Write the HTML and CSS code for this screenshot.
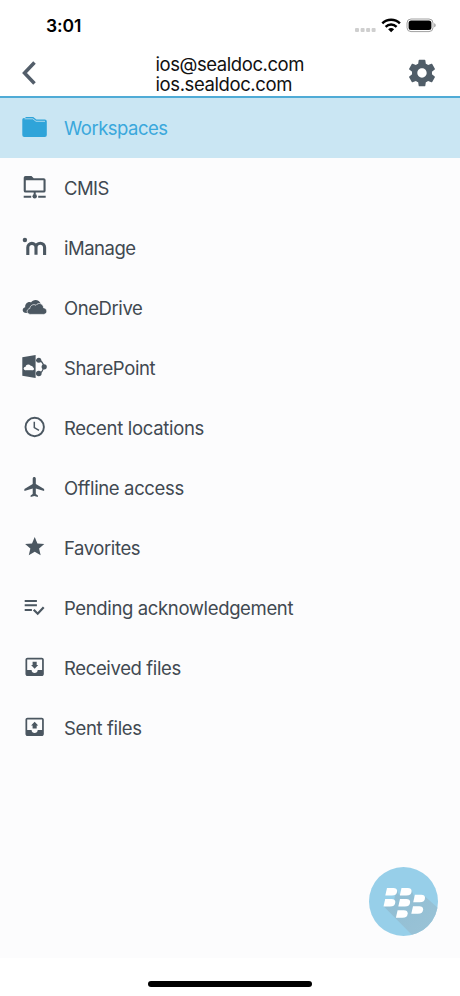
FILE: index.html
```html
<!DOCTYPE html>
<html lang="en">
<head>
<meta charset="utf-8">
<title>Locations</title>
<link rel="stylesheet" href="styles.css">
</head>
<body>
<div class="screen">
  <div class="status">
    <span class="time">3:01</span>
    <svg class="indicators" width="82" height="20" viewBox="0 0 82 20">
      <g fill="#cfcfcf"><rect x="0" y="12" width="4" height="4" rx="1"/><rect x="5.6" y="12" width="4" height="4" rx="1"/><rect x="11.1" y="12" width="4" height="4" rx="1"/><rect x="16.6" y="12" width="4" height="4" rx="1"/></g>
      <g fill="none" stroke="#000" stroke-width="2.500"><path d="M27.300 7.300a12.600 12.600 0 0 1 17.600 0"/><path d="M30.600 10.800a8 8 0 0 1 11 0"/></g>
      <path d="M33.100 13.300a4.600 4.600 0 0 1 6 0l-3 3z"/>
      <rect x="52" y="3" width="26" height="12.600" rx="4" fill="none" stroke="#a0a0a0"/>
      <rect x="53.600" y="4.600" width="22.800" height="9.400" rx="2.500"/>
      <path d="M79.200 7.200c2 .5 2 3.600 0 4.100z" fill="#a0a0a0"/>
    </svg>
  </div>
  <header class="header">
    <svg class="back" width="18" height="26" viewBox="0 0 18 26"><path d="M14.500 2.500L4.500 13l10 10.500" fill="none" stroke="#535e6a" stroke-width="3.500"/></svg>
    <div class="account"><div class="mail">ios@sealdoc.com</div><div class="host">ios.sealdoc.com</div></div>
    <svg class="gear" width="32" height="32" viewBox="0 0 24 24"><path d="M19.430 12.980c.04-.32.07-.64.07-.98s-.03-.66-.07-.98l2.110-1.650c.19-.15.24-.42.12-.64l-2-3.460c-.12-.22-.39-.3-.61-.22l-2.490 1c-.52-.4-1.080-.73-1.690-.98l-.38-2.650C14.460 2.180 14.250 2 14 2h-4c-.25 0-.46.18-.49.42l-.38 2.650c-.61.25-1.170.59-1.690.98l-2.490-1c-.23-.09-.49 0-.61.22l-2 3.460c-.13.22-.07.49.12.64l2.110 1.650c-.04.32-.07.65-.07.98s.03.66.07.98l-2.110 1.650c-.19.15-.24.42-.12.64l2 3.460c.12.22.39.3.61.22l2.490-1c.52.4 1.080.73 1.690.98l.38 2.650c.03.24.24.42.49.42h4c.25 0 .46-.18.49-.42l.38-2.650c.61-.25 1.170-.59 1.690-.98l2.490 1c.23.09.49 0 .61-.22l2-3.460c.12-.22.07-.49-.12-.64l-2.110-1.650zM12 15.500c-1.930 0-3.500-1.570-3.500-3.500s1.570-3.500 3.500-3.500 3.500 1.570 3.500 3.500-1.570 3.500-3.500 3.500z"/></svg>
  </header>
  <main class="list">
    <div class="row active">
      <svg class="icon" viewBox="0 0 32 32"><path d="M4.300 9V7.500q0-1.500 1.600-1.500H7l1-.9h7.200l3.200 2.500h8.400q2 0 2 2V23q0 2-2 2H6.300q-2 0-2-2z"/><path d="M6.500 6.800h8.300l3.200 2.500h9" fill="none" stroke="#b9dff0" stroke-width=".9"/></svg>
      <span class="label l1">Workspaces</span></div>
    <div class="row">
      <svg class="icon" viewBox="0 0 32 32"><path fill-rule="evenodd" d="M5.700 5.700q0-1.800 1.800-1.800h6l2.200 2.300h10q1.900 0 1.900 1.900v10.600q0 1.900-1.900 1.900H7.600q-1.900 0-1.900-1.900zM7.800 8.300v10.200h17.700V8.300z"/><path d="M15.700 20h2v2.400h-2z"/><circle cx="16.700" cy="24.300" r="2.200"/><path d="M5.700 23.800h7.500v2H5.700zM20.200 23.800h7.500v2h-7.500z"/></svg>
      <span class="label l2">CMIS</span></div>
    <div class="row">
      <svg class="icon" viewBox="0 0 32 32"><circle cx="6.900" cy="8" r="2.200"/><path d="M9.800 23v-7.500a4.100 4.100 0 0 1 8.200 0V22.700v-7.200a4.300 4.300 0 0 1 8.600 0V23" fill="none" stroke="currentColor" stroke-width="3.100"/></svg>
      <span class="label l3">iManage</span></div>
    <div class="row">
      <svg class="icon" viewBox="0 0 32 32"><path d="M8.300 21C4 21 3.500 16 7.200 15.200 6.800 11.300 10.500 9 13 10.400 15 6.800 21.500 7 22.800 12l-3 7-9 2z"/><path d="M12.500 22.400C8.300 22.400 8 17.300 11.800 16.500 12.200 13 15.800 11.700 18 13.300c2.300-3.500 7.700-1.500 7.500 2.500 4.500.4 4.300 6.600 0 6.600z" stroke="#fcfcfd" stroke-width=".7"/></svg>
      <span class="label l4">OneDrive</span></div>
    <div class="row">
      <svg class="icon" viewBox="0 0 32 32"><path d="M4.300 5.200L17.600 3v23L4.300 23.800z"/><g fill="#fcfcfd"><circle cx="7.400" cy="16.500" r="1.700"/><circle cx="10.300" cy="15.200" r="2.700"/><circle cx="13" cy="15.700" r="1.900"/><circle cx="14.500" cy="16.700" r="1.500"/><path d="M7.400 15.500h7v2.700h-7z"/></g><g fill="none" stroke="currentColor" stroke-width="1.300"><path d="M20.800 8.500q4 .5 5 6-1 6-5 7M18 8.500h3M18 21.500h3"/></g><circle cx="20.800" cy="8.300" r="2.500"/><circle cx="26.200" cy="14.800" r="2.600"/><circle cx="20.800" cy="21.500" r="2.800"/></svg>
      <span class="label l5">SharePoint</span></div>
    <div class="row">
      <svg class="icon" viewBox="0 0 32 32"><g fill="none" stroke="currentColor"><circle cx="16.700" cy="15" r="9.200" stroke-width="1.900"/><path d="M16.300 9.700v5.900l4.700 2.700" stroke-width="1.500"/></g></svg>
      <span class="label l6">Recent locations</span></div>
    <div class="row">
      <svg class="icon" viewBox="0 0 32 32"><path transform="translate(4.300 3) scale(1.040 1)" d="M21 16v-2l-8-5V3.500c0-.83-.67-1.500-1.500-1.500S10 2.670 10 3.500V9l-8 5v2l8-2.500V19l-2 1.500V22l3.500-1 3.500 1v-1.500L13 19v-5.500l8 2.500z"/></svg>
      <span class="label l7">Offline access</span></div>
    <div class="row">
      <svg class="icon" viewBox="0 0 32 32"><path transform="translate(5.200 3.200) scale(.960)" d="M12 17.270L18.180 21l-1.640-7.030L22 9.240l-7.190-.61L12 2 9.190 8.630 2 9.240l5.460 4.730L5.820 21z"/></svg>
      <span class="label l8">Favorites</span></div>
    <div class="row">
      <svg class="icon" viewBox="0 0 32 32"><path d="M6.700 8h12.200v2H6.700zM6.700 12.300h12.200v2H6.700zM6.700 17h7.200v2H6.700z"/><path d="M15.700 17.700l4 4 6-6.500" fill="none" stroke="currentColor" stroke-width="2.200"/></svg>
      <span class="label l9">Pending acknowledgement</span></div>
    <div class="row">
      <svg class="icon" viewBox="0 0 32 32"><path transform="translate(4.400 2.700) scale(1.020)" d="M19 3H5c-1.110 0-2 .9-2 2v14c0 1.100.88 2 2 2h14c1.100 0 2-.9 2-2V5c0-1.100-.9-2-2-2zm.3 12H15c0 1.660-1.350 3-3 3s-3-1.340-3-3H4.700V4.700h14.600zM15.500 10H14V7h-4v3H8.500l3.500 3.700z"/></svg>
      <span class="label l10">Received files</span></div>
    <div class="row">
      <svg class="icon" viewBox="0 0 32 32"><path transform="translate(4.400 2.700) scale(1.020)" d="M19 3H5c-1.110 0-2 .9-2 2v14c0 1.100.88 2 2 2h14c1.100 0 2-.9 2-2V5c0-1.100-.9-2-2-2zm.3 12H15c0 1.660-1.350 3-3 3s-3-1.340-3-3H4.700V4.700h14.600zM8.500 10.500H10v3h4v-3h1.500L12 6.800z"/></svg>
      <span class="label l11">Sent files</span></div>
    <svg class="fab" width="69" height="69" viewBox="0 0 69 69">
      <defs>
        <clipPath id="disc"><circle cx="34.500" cy="34.500" r="34.500"/></clipPath>
        <linearGradient id="shade" x1="0" y1="0" x2="1" y2="1"><stop offset="0" stop-color="#8fbdd3"/><stop offset="1" stop-color="#9bc3d6"/></linearGradient>
        <path id="cell" d="M1.700 0H8Q11.800 0 11.800 3 11.800 7.500 6.500 7.500H0z"/>
      </defs>
      <circle cx="34.500" cy="34.500" r="34.500" fill="#97cfe9"/>
      <path clip-path="url(#disc)" fill="url(#shade)" d="M14.300 39L45 70h25V42L55.500 29 47 35 42.500 22.500 30 28 27.500 22 24 38z"/>
      <g fill="#fff"><use href="#cell" x="16.300" y="21"/><use href="#cell" x="30.800" y="21"/><use href="#cell" x="14.500" y="32"/><use href="#cell" x="29.300" y="32"/><use href="#cell" x="44.200" y="27.800"/><use href="#cell" x="42.300" y="39.300"/><use href="#cell" x="26.900" y="43.200"/></g>
    </svg>
  </main>
  <footer class="home"><div class="bar"></div></footer>
</div>
</body>
</html>
```
FILE: styles.css
```css
body { margin: 0; font-family: Inter, "Liberation Sans", sans-serif; }
svg { display: block; flex: none; }
.screen { width: 460px; height: 996px; display: flex; flex-direction: column; background: #fff; overflow: hidden; }
.status { height: 50px; box-sizing: border-box; padding: 1px 23.5px 0 46px; display: flex; justify-content: space-between; align-items: center; }
.time { font-size: 17.5px; font-weight: 600; color: #000; letter-spacing: -0.1px; }
.header { height: 48px; box-sizing: border-box; border-bottom: 2px solid #4fabd6; padding: 0 22px 0 20px; display: flex; align-items: center; }
.back { width: 18px; }
.account { flex: 1; margin-left: 117.5px; padding-top: 1px; font-size: 18.5px; line-height: 20px; color: #111; white-space: nowrap; }
.mail { letter-spacing: -0.43px; }
.host { letter-spacing: -0.4px; }
.gear { fill: #505d68; }
.list { position: relative; height: 860px; background: #fcfcfd; }
.row { height: 60px; display: flex; align-items: center; padding-left: 18px; color: #4b5761; }
.icon { width: 32px; height: 32px; fill: currentColor; }
.label { margin-left: 14px; font-size: 18.5px; line-height: 24px; color: #414951; white-space: nowrap; letter-spacing: -0.36px; }
.l1 { letter-spacing: -0.5px; }
.l2 { letter-spacing: -0.6px; }
.l3 { letter-spacing: -0.5px; }
.l4 { letter-spacing: -0.42px; }
.l6 { letter-spacing: -0.31px; }
.l8 { letter-spacing: -0.42px; }
.active { background: #cae6f3; color: #2fa4d9; }
.active .label { color: #3aa8dc; }
.fab { position: absolute; right: 22px; bottom: 22px; }
.home { flex: 1; display: flex; justify-content: center; align-items: center; padding-top: 14px; }
.bar { width: 164px; height: 6px; border-radius: 3px; background: #000; }
```
